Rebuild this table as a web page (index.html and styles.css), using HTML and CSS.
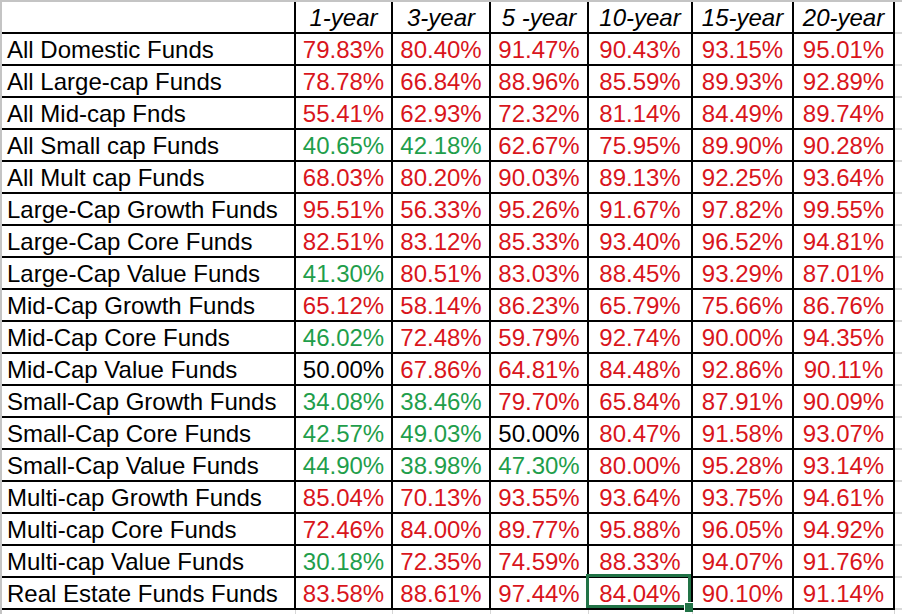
FILE: index.html
```html
<!DOCTYPE html>
<html>
<head>
<meta charset="utf-8">
<link rel="stylesheet" href="styles.css">
</head>
<body>
<div class="sheet">
  <div class="c lab hd"></div><div class="c hd">1-year</div><div class="c hd">3-year</div><div class="c hd">5 -year</div><div class="c hd colsel">10-year</div><div class="c hd">15-year</div><div class="c hd">20-year</div><div class="g"></div>

  <div class="c lab">All Domestic Funds</div><div class="c r">79.83%</div><div class="c r">80.40%</div><div class="c r">91.47%</div><div class="c r">90.43%</div><div class="c r">93.15%</div><div class="c r">95.01%</div><div class="g"></div>
  <div class="c lab">All Large-cap Funds</div><div class="c r">78.78%</div><div class="c r">66.84%</div><div class="c r">88.96%</div><div class="c r">85.59%</div><div class="c r">89.93%</div><div class="c r">92.89%</div><div class="g"></div>
  <div class="c lab">All Mid-cap Fnds</div><div class="c r">55.41%</div><div class="c r">62.93%</div><div class="c r">72.32%</div><div class="c r">81.14%</div><div class="c r">84.49%</div><div class="c r">89.74%</div><div class="g"></div>
  <div class="c lab">All Small cap Funds</div><div class="c gr">40.65%</div><div class="c gr">42.18%</div><div class="c r">62.67%</div><div class="c r">75.95%</div><div class="c r">89.90%</div><div class="c r">90.28%</div><div class="g"></div>
  <div class="c lab">All Mult cap Funds</div><div class="c r">68.03%</div><div class="c r">80.20%</div><div class="c r">90.03%</div><div class="c r">89.13%</div><div class="c r">92.25%</div><div class="c r">93.64%</div><div class="g"></div>
  <div class="c lab">Large-Cap Growth Funds</div><div class="c r">95.51%</div><div class="c r">56.33%</div><div class="c r">95.26%</div><div class="c r">91.67%</div><div class="c r">97.82%</div><div class="c r">99.55%</div><div class="g"></div>
  <div class="c lab">Large-Cap Core Funds</div><div class="c r">82.51%</div><div class="c r">83.12%</div><div class="c r">85.33%</div><div class="c r">93.40%</div><div class="c r">96.52%</div><div class="c r">94.81%</div><div class="g"></div>
  <div class="c lab">Large-Cap Value Funds</div><div class="c gr">41.30%</div><div class="c r">80.51%</div><div class="c r">83.03%</div><div class="c r">88.45%</div><div class="c r">93.29%</div><div class="c r">87.01%</div><div class="g"></div>
  <div class="c lab">Mid-Cap Growth Funds</div><div class="c r">65.12%</div><div class="c r">58.14%</div><div class="c r">86.23%</div><div class="c r">65.79%</div><div class="c r">75.66%</div><div class="c r">86.76%</div><div class="g"></div>
  <div class="c lab">Mid-Cap Core Funds</div><div class="c gr">46.02%</div><div class="c r">72.48%</div><div class="c r">59.79%</div><div class="c r">92.74%</div><div class="c r">90.00%</div><div class="c r">94.35%</div><div class="g"></div>
  <div class="c lab">Mid-Cap Value Funds</div><div class="c">50.00%</div><div class="c r">67.86%</div><div class="c r">64.81%</div><div class="c r">84.48%</div><div class="c r">92.86%</div><div class="c r">90.11%</div><div class="g"></div>
  <div class="c lab">Small-Cap Growth Funds</div><div class="c gr">34.08%</div><div class="c gr">38.46%</div><div class="c r">79.70%</div><div class="c r">65.84%</div><div class="c r">87.91%</div><div class="c r">90.09%</div><div class="g"></div>
  <div class="c lab">Small-Cap Core Funds</div><div class="c gr">42.57%</div><div class="c gr">49.03%</div><div class="c">50.00%</div><div class="c r">80.47%</div><div class="c r">91.58%</div><div class="c r">93.07%</div><div class="g"></div>
  <div class="c lab">Small-Cap Value Funds</div><div class="c gr">44.90%</div><div class="c gr">38.98%</div><div class="c gr">47.30%</div><div class="c r">80.00%</div><div class="c r">95.28%</div><div class="c r">93.14%</div><div class="g"></div>
  <div class="c lab">Multi-cap Growth Funds</div><div class="c r">85.04%</div><div class="c r">70.13%</div><div class="c r">93.55%</div><div class="c r">93.64%</div><div class="c r">93.75%</div><div class="c r">94.61%</div><div class="g"></div>
  <div class="c lab">Multi-cap Core Funds</div><div class="c r">72.46%</div><div class="c r">84.00%</div><div class="c r">89.77%</div><div class="c r">95.88%</div><div class="c r">96.05%</div><div class="c r">94.92%</div><div class="g"></div>
  <div class="c lab">Multi-cap Value Funds</div><div class="c gr">30.18%</div><div class="c r">72.35%</div><div class="c r">74.59%</div><div class="c r">88.33%</div><div class="c r">94.07%</div><div class="c r">91.76%</div><div class="g"></div>
  <div class="c lab rowsel">Real Estate Funds Funds</div><div class="c r">83.58%</div><div class="c r">88.61%</div><div class="c r">97.44%</div><div class="c r sel">84.04%</div><div class="c r">90.10%</div><div class="c r">91.14%</div><div class="g"></div>

  <div class="f"></div><div class="f"></div><div class="f"></div><div class="f"></div><div class="f"></div><div class="f"></div><div class="f"></div><div class="f last"></div>
</div>
</body>
</html>
```

FILE: styles.css
```css
html, body {
  margin: 0;
  padding: 0;
  background: #ffffff;
}

.sheet {
  display: grid;
  grid-template-columns: 294px 97px 98px 98px 104px 101px 101px 1fr;
  grid-auto-rows: 32px;
  border-top: 2px solid #c4c4c4;
  border-left: 2px solid #c4c4c4;
  width: 900px;
  height: 612px;
  overflow: hidden;
  font-family: "Liberation Sans", Arial, Helvetica, sans-serif;
  font-size: 24px;
  color: #000000;
}

.c {
  box-sizing: border-box;
  border-right: 2px solid #000000;
  border-bottom: 2px solid #000000;
  display: flex;
  align-items: center;
  justify-content: center;
  padding-top: 1px;
  white-space: nowrap;
  position: relative;
}

.lab {
  justify-content: flex-start;
  padding-left: 5px;
}

.hd {
  font-style: italic;
}

.r {
  color: #d9151c;
}

.gr {
  color: #1f9e4b;
}

.g {
  box-sizing: border-box;
  border-bottom: 2px solid #d9d9d9;
}

.f {
  box-sizing: border-box;
  border-right: 1px solid #d6d6d6;
  height: 6px;
}

.f.last {
  border-right: none;
}

.colsel::before {
  content: "";
  position: absolute;
  left: -1px;
  right: -1px;
  top: -2px;
  height: 2px;
  background: #217346;
}

.rowsel::before {
  content: "";
  position: absolute;
  left: -2px;
  top: -1px;
  bottom: -2px;
  width: 2px;
  background: #217346;
}

.sel::before {
  content: "";
  position: absolute;
  left: -3px;
  top: -4px;
  right: 0;
  bottom: 0;
  border: 3px solid #217346;
}

.sel::after {
  content: "";
  position: absolute;
  right: -2px;
  bottom: -4px;
  width: 8px;
  height: 9px;
  background: #217346;
  border-left: 1px solid #ffffff;
  border-top: 1px solid #ffffff;
}
```
